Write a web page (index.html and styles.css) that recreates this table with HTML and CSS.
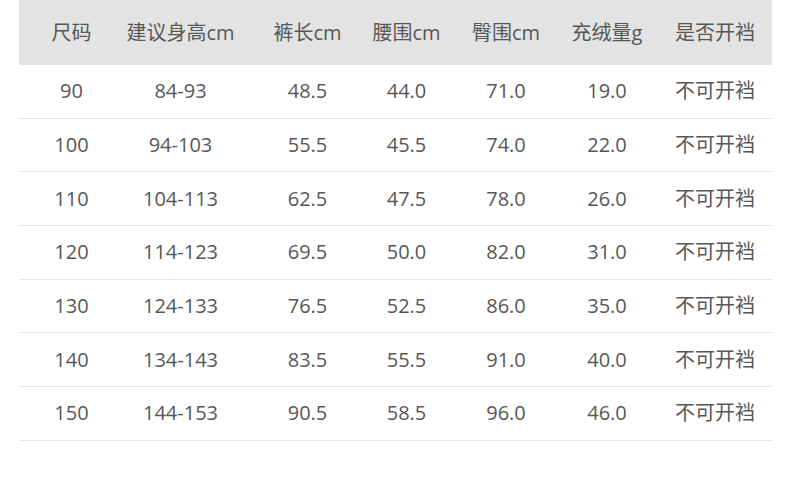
FILE: index.html
```html
<!DOCTYPE html>
<html lang="zh">
<head>
<meta charset="utf-8">
<link rel="stylesheet" href="styles.css">
</head>
<body>
<div class="table">
  <div class="row head">
    <div>尺码</div><div>建议身高cm</div><div>裤长cm</div><div>腰围cm</div><div>臀围cm</div><div>充绒量g</div><div>是否开裆</div>
  </div>
  <div class="row"><div>90</div><div>84-93</div><div>48.5</div><div>44.0</div><div>71.0</div><div>19.0</div><div>不可开裆</div></div>
  <div class="row"><div>100</div><div>94-103</div><div>55.5</div><div>45.5</div><div>74.0</div><div>22.0</div><div>不可开裆</div></div>
  <div class="row"><div>110</div><div>104-113</div><div>62.5</div><div>47.5</div><div>78.0</div><div>26.0</div><div>不可开裆</div></div>
  <div class="row"><div>120</div><div>114-123</div><div>69.5</div><div>50.0</div><div>82.0</div><div>31.0</div><div>不可开裆</div></div>
  <div class="row"><div>130</div><div>124-133</div><div>76.5</div><div>52.5</div><div>86.0</div><div>35.0</div><div>不可开裆</div></div>
  <div class="row"><div>140</div><div>134-143</div><div>83.5</div><div>55.5</div><div>91.0</div><div>40.0</div><div>不可开裆</div></div>
  <div class="row"><div>150</div><div>144-153</div><div>90.5</div><div>58.5</div><div>96.0</div><div>46.0</div><div>不可开裆</div></div>
</div>
</body>
</html>
```
FILE: styles.css
```css
html, body {
  margin: 0;
  padding: 0;
  background: #ffffff;
}
body {
  font-family: "Open Sans", "Noto Sans CJK SC", sans-serif;
  color: #575757;
  font-size: 20px;
}
.table {
  margin-left: 19px;
  width: 753px;
}
.row {
  display: grid;
  grid-template-columns: 107px 118px 113px 99px 100px 105px 111px;
  height: 53.7px;
  box-sizing: border-box;
  border-bottom: 1px solid #e6e6e6;
  align-items: center;
}
.row > div {
  text-align: center;
  line-height: 1;
  white-space: nowrap;
}
.row > div:nth-child(1) {
  padding-right: 2px;
}
.row > div:nth-child(2) {
  padding-right: 9px;
}
.row > div:nth-child(3) {
  padding-left: 14px;
}
.row > div:nth-child(6),
.row > div:nth-child(7) {
  padding-right: 3px;
}
.row.head {
  height: 65px;
  background: #e3e3e3;
  border-bottom: none;
}
```
